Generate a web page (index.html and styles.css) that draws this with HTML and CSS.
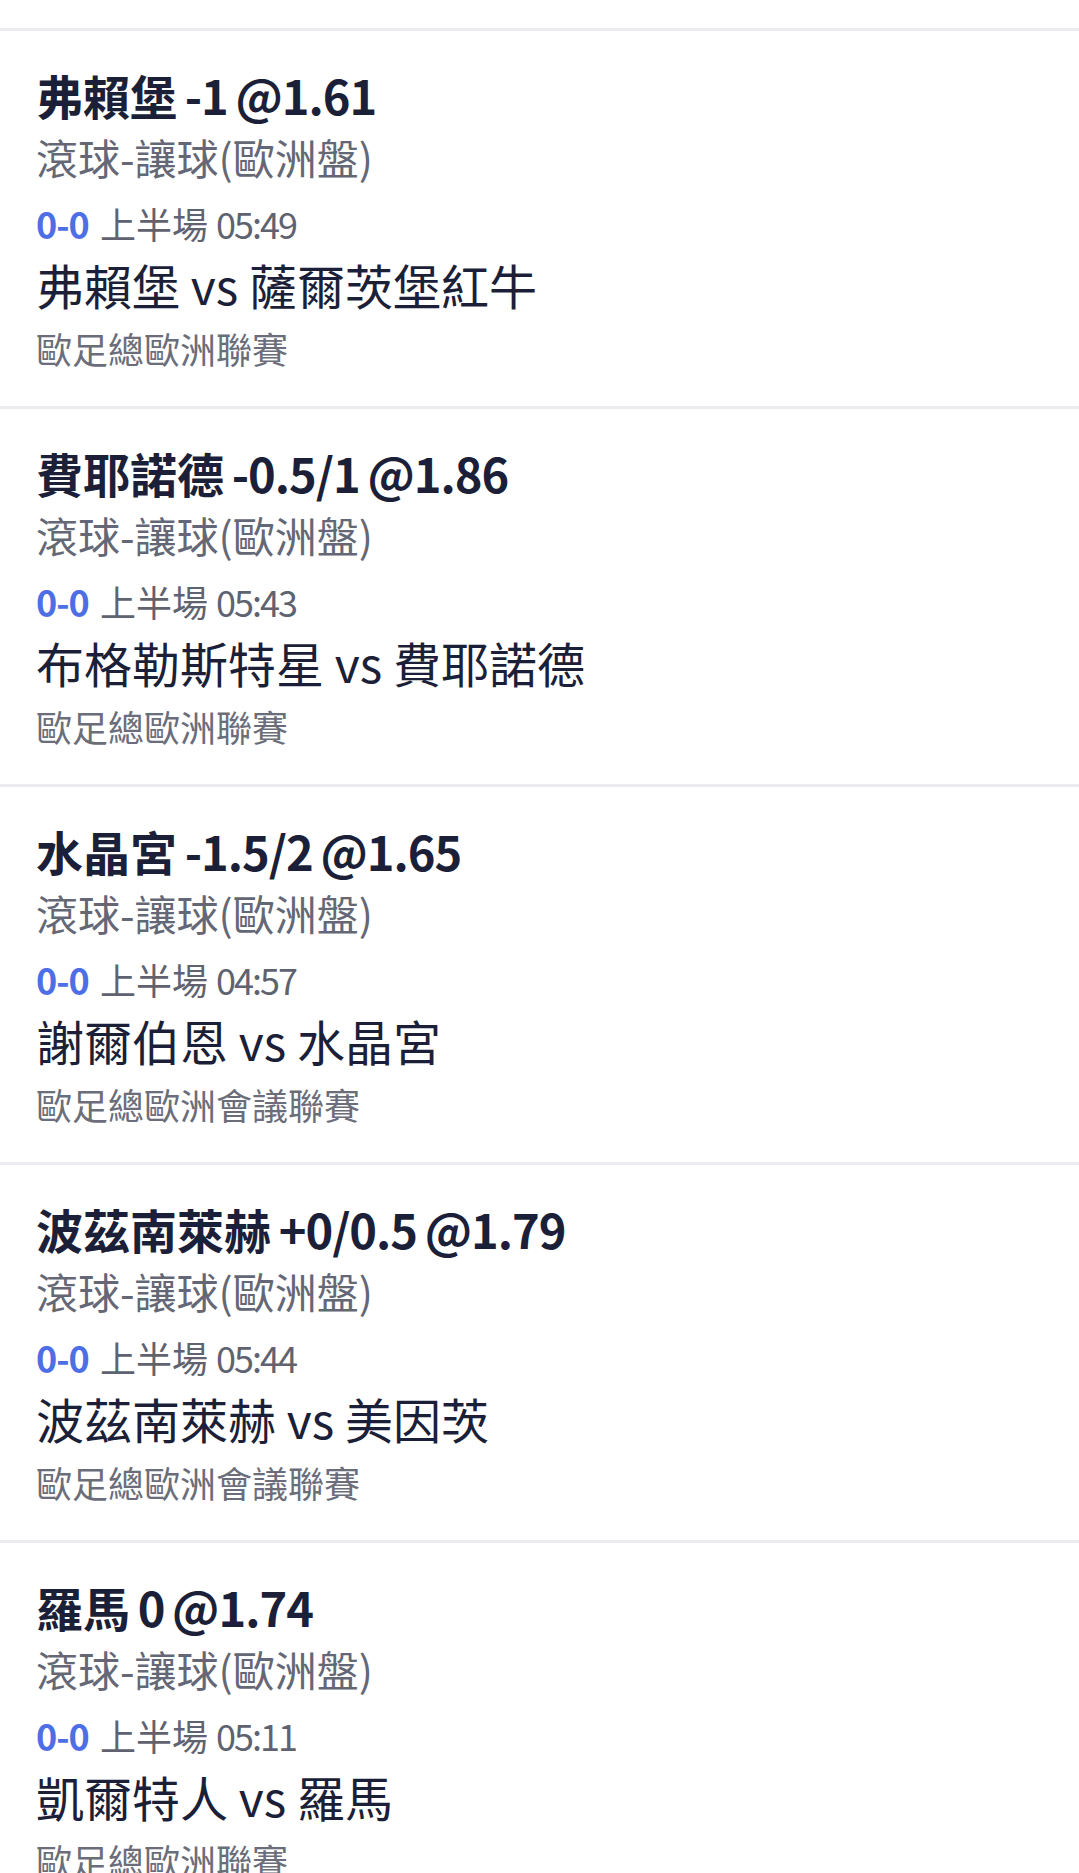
FILE: index.html
```html
<!DOCTYPE html>
<html lang="zh-Hant">
<head>
  <meta charset="UTF-8">
  <title>注單</title>
  <link rel="stylesheet" href="styles.css">
</head>
<body>
  <div id="betList" class="bet-list"></div>

  <script>
    const betList = document.getElementById("betList");

    const bets = [
      { pick: "弗賴堡", line: "-1", odds: "1.61", time: "05:49", home: "弗賴堡", away: "薩爾茨堡紅牛", league: "歐足總歐洲聯賽" },
      { pick: "費耶諾德", line: "-0.5/1", odds: "1.86", time: "05:43", home: "布格勒斯特星", away: "費耶諾德", league: "歐足總歐洲聯賽" },
      { pick: "水晶宮", line: "-1.5/2", odds: "1.65", time: "04:57", home: "謝爾伯恩", away: "水晶宮", league: "歐足總歐洲會議聯賽" },
      { pick: "波茲南萊赫", line: "+0/0.5", odds: "1.79", time: "05:44", home: "波茲南萊赫", away: "美因茨", league: "歐足總歐洲會議聯賽" },
      { pick: "羅馬", line: "0", odds: "1.74", time: "05:11", home: "凱爾特人", away: "羅馬", league: "歐足總歐洲聯賽" }
    ];

    function renderBets() {
      betList.innerHTML = "";

      bets.forEach(bet => {
        const card = document.createElement("div");
        card.className = "bet-card";
        card.innerHTML = `
          <div class="bet-title">${bet.pick}<span class="odds"> ${bet.line} @${bet.odds}</span></div>
          <div class="bet-type">滾球-讓球(歐洲盤)</div>
          <div class="bet-status"><span class="score">0-0</span> 上半場 <span class="clock">${bet.time}</span></div>
          <div class="bet-match">${bet.home} vs ${bet.away}</div>
          <div class="bet-league">${bet.league}</div>
        `;
        betList.appendChild(card);
      });
    }

    renderBets();
  </script>
</body>
</html>
```

FILE: styles.css
```css
body {
  background-color: #ffffff;
  color: #1c1f38;
  font-family: 'Noto Sans CJK TC', 'Noto Sans', sans-serif;
  margin: 0;
  padding: 0;
}
.bet-list {
  padding-top: 28px;
}
.bet-card {
  border-top: 3px solid #ebebf0;
  padding: 34px 31px 21px 36px;
}
.bet-title {
  font-size: 47px;
  font-weight: bold;
  line-height: 60px;
  color: #1c1f38;
  white-space: nowrap;
}
.bet-title .odds {
  letter-spacing: -1px;
  word-spacing: -2px;
}
.bet-type {
  font-size: 42px;
  line-height: 64px;
  color: #646876;
}
.bet-status {
  font-size: 36px;
  line-height: 68px;
  color: #5f6370;
}
.bet-status .score {
  color: #4e6ee6;
  font-weight: bold;
  letter-spacing: -1px;
  margin-right: 3px;
}
.bet-status .clock {
  letter-spacing: -2px;
}
.bet-match {
  font-size: 48px;
  line-height: 54px;
  color: #1c1f38;
  white-space: nowrap;
}
.bet-league {
  font-size: 36px;
  line-height: 74px;
  color: #6b6e7a;
}
```
